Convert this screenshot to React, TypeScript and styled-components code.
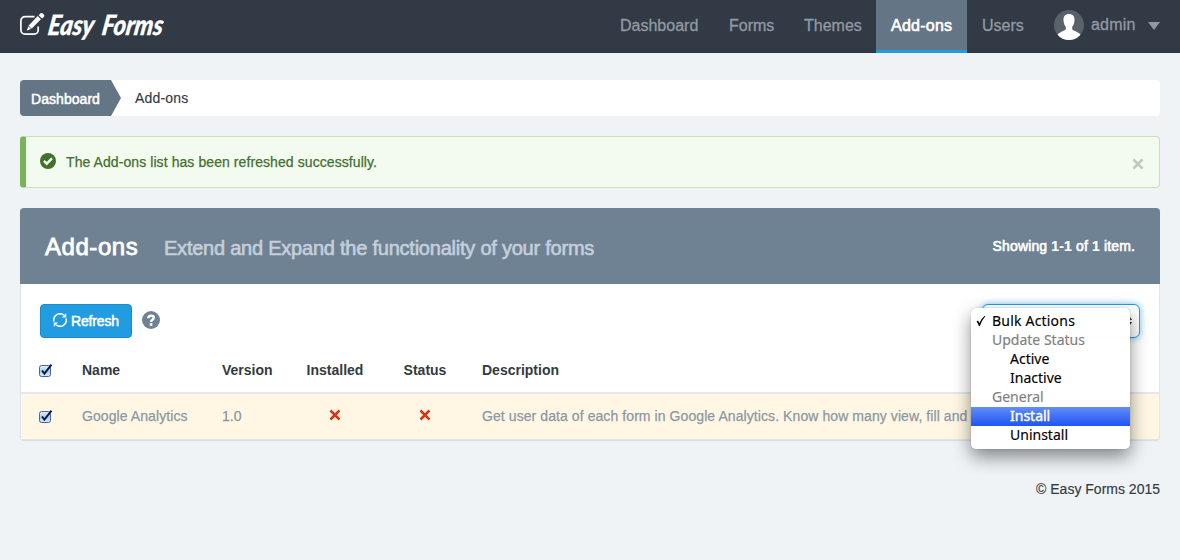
import React from 'react';
import styled, { createGlobalStyle } from 'styled-components';

const GlobalStyle = createGlobalStyle`
  * { box-sizing: border-box; }
  body {
    margin: 0;
    background: #eff3f6;
    color: #333a42;
    font: 14px/20px "Liberation Sans", Arial, sans-serif;
    overflow: hidden;
  }
`;

const Header = styled.header`
  display: flex;
  justify-content: space-between;
  height: 53px;
  padding: 0 20px;
  background: #323a45;
  border-bottom: 1px solid #2f3540;
`;

const Brand = styled.div`
  display: flex;
  align-items: flex-start;
  padding-top: 12px;
`;

const BrandName = styled.svg`
  margin-top: -6px;
  overflow: visible;
`;

const Nav = styled.nav`
  display: flex;
  height: 53px;
  font-size: 16px;
`;

const NavItem = styled.a<{ $active?: boolean; $width: number }>`
  width: ${(p) => p.$width}px;
  padding: 16px 0 0 15px;
  white-space: nowrap;
  color: ${(p) => (p.$active ? '#fff' : '#9299a3')};
  background: ${(p) => (p.$active ? '#647585' : 'transparent')};
  border-bottom: 3px solid ${(p) => (p.$active ? '#229ce1' : 'transparent')};
  letter-spacing: ${(p) => (p.$active ? '0.25px' : '0')};
  -webkit-text-stroke: ${(p) => (p.$active ? '0.6px #fff' : '0.3px #9299a3')};
`;

const UserMenu = styled.div`
  display: flex;
  padding: 10px 0 0 15px;
  color: #9299a3;
`;

const UserName = styled.span`
  flex: none;
  width: 64px;
  padding: 5px 0 0 7px;
  letter-spacing: 0.2px;
  -webkit-text-stroke: 0.3px #9299a3;
`;

const Caret = styled.span`
  align-self: flex-start;
  margin-top: 12px;
  border: 6px solid transparent;
  border-top: 8px solid #9299a3;
  border-bottom: 0;
`;

const Main = styled.main`
  padding: 27px 20px 0;
`;

const Breadcrumb = styled.div`
  display: flex;
  height: 36px;
  background: #fff;
  border-radius: 4px;
  overflow: hidden;
`;

const CrumbLink = styled.a`
  width: 101px;
  padding: 9px 0 0 11px;
  color: #fff;
  background: #647585;
  clip-path: polygon(0 0, 91px 0, 100% 50%, 91px 100%, 0 100%);
  letter-spacing: 0.05px;
  -webkit-text-stroke: 0.5px #fff;
`;

const CrumbCurrent = styled.span`
  padding: 8px 0 0 14px;
  letter-spacing: 0.2px;
  -webkit-text-stroke: 0.15px #333a42;
`;

const Alert = styled.div`
  display: flex;
  align-items: center;
  height: 52px;
  margin-top: 20px;
  padding: 0 15px 0 14px;
  color: #43702f;
  background: #f3faef;
  border: 1px solid #c8e2b7;
  border-left: 6px solid #78b459;
  border-radius: 4px;
  > svg { margin-top: -2px; }
`;

const AlertText = styled.span`
  flex: 1;
  margin-left: 10px;
  letter-spacing: 0.08px;
  -webkit-text-stroke: 0.25px #43702f;
`;

const CloseButton = styled.span`
  display: flex;
  padding-top: 6px;
`;

const Panel = styled.section`
  position: relative;
  margin-top: 20px;
  height: 232px;
  border: 1px solid #dfe6eb;
  border-top: 0;
  border-radius: 4px;
  background: #fff;
  box-shadow: 0 1px 1px #d5dde4;
`;

const PanelHeader = styled.div`
  display: flex;
  align-items: center;
  height: 76px;
  margin: 0 -1px;
  padding: 0 25px;
  background: #6f8293;
  border-radius: 4px 4px 0 0;
  color: #fff;
`;

const Title = styled.h1`
  width: 119px;
  margin: 0;
  padding-top: 2px;
  font-size: 24px;
  font-weight: 400;
  letter-spacing: 0.55px;
  -webkit-text-stroke: 0.8px #fff;
`;

const Subtitle = styled.span`
  flex: 1;
  padding-top: 4px;
  font-size: 20px;
  letter-spacing: -0.23px;
  color: #c5cfda;
  -webkit-text-stroke: 0.6px #c5cfda;
`;

const Summary = styled.span`
  letter-spacing: 0.14px;
  -webkit-text-stroke: 0.6px #fff;
  b { -webkit-text-stroke: 0.2px #fff; }
`;

const Toolbar = styled.div`
  display: flex;
  align-items: flex-start;
  height: 66px;
  padding: 20px 19px 0;
`;

const RefreshButton = styled.button`
  display: flex;
  align-items: center;
  gap: 4px;
  width: 92px;
  height: 34px;
  padding: 0 0 0 12px;
  border: 1px solid #1b8bcc;
  border-radius: 4px;
  background: #229ce1;
  color: #fff;
  font: 14px "Liberation Sans", Arial, sans-serif;
  letter-spacing: -0.15px;
  -webkit-text-stroke: 0.5px #fff;
  svg { flex: none; margin-top: -2px; }
`;

const HelpIcon = styled.svg`
  margin: 7px 0 0 10px;
`;

const Select = styled.div`
  display: flex;
  justify-content: flex-end;
  align-items: center;
  width: 158px;
  height: 34px;
  margin-left: auto;
  padding-right: 6px;
  background: #fff;
  border: 1px solid #229ce1;
  border-radius: 6px;
  box-shadow: 0 0 7px rgba(34, 156, 225, 0.6);
`;

const Row = styled.div<{ $head?: boolean }>`
  display: grid;
  grid-template-columns: 42px 140px 75px 76px 104px 1fr;
  align-items: center;
  height: ${(p) => (p.$head ? 44 : 45)}px;
  padding: 0 0 ${(p) => (p.$head ? 2 : 1)}px 19px;
  font-weight: ${(p) => (p.$head ? 700 : 400)};
  letter-spacing: ${(p) => (p.$head ? 0 : 0.08)}px;
  color: ${(p) => (p.$head ? '#323a43' : '#8d98a3')};
  background: ${(p) => (p.$head ? '#fff' : '#fff7e4')};
  border-bottom: ${(p) => (p.$head ? '2px solid #e3e8ee' : '0')};
  -webkit-text-stroke: ${(p) => (p.$head ? '0' : '0.25px #8d98a3')};
  white-space: nowrap;
`;

const IconCell = styled.span`
  display: flex;
  margin-left: -1px;
`;

const CenterCell = styled.span`
  display: flex;
  justify-content: center;
`;

const DescriptionCell = styled.span`
  padding-left: 5px;
`;

const CrossIcon = styled.svg`
  margin-top: -2px;
`;

const Menu = styled.div`
  position: absolute;
  z-index: 2;
  left: 950px;
  top: 100px;
  width: 159px;
  height: 141px;
  padding-top: 4px;
  border-radius: 5px;
  background: rgba(255, 255, 255, 0.985);
  box-shadow: 0 0 1px rgba(0, 0, 0, 0.5), 0 8px 18px rgba(0, 0, 0, 0.45);
  font: 14px/17px "Noto Sans", sans-serif;
  color: #000;
`;

const Option = styled.div<{ $kind?: 'group' | 'child' | 'active' }>`
  position: relative;
  height: 19px;
  padding-left: ${(p) => (p.$kind === 'child' || p.$kind === 'active' ? 39 : 21)}px;
  letter-spacing: ${(p) => (p.$kind ? 0 : 0.2)}px;
  color: ${(p) => (p.$kind === 'group' ? '#808080' : p.$kind === 'active' ? '#fff' : '#000')};
  background: ${(p) => (p.$kind === 'active' ? 'linear-gradient(#648df8, #1d55f5)' : 'none')};
  -webkit-text-stroke: ${(p) => (p.$kind === 'active' ? '0.4px #fff' : '0.15px currentColor')};
`;

const OptionCheck = styled.svg`
  position: absolute;
  left: 5px;
  top: 3px;
`;

const Footer = styled.footer`
  margin-top: 39px;
  text-align: right;
  -webkit-text-stroke: 0.15px #333a42;
`;

function Checkbox() {
  return (
    <svg width="14" height="15" viewBox="0 0 14 15">
      <defs>
        <linearGradient id="boxFill" x1="0" y1="0" x2="0" y2="1">
          <stop offset="0" stopColor="#e3effb" />
          <stop offset=".5" stopColor="#a9d0f5" />
          <stop offset="1" stopColor="#c9edff" />
        </linearGradient>
      </defs>
      <rect x=".5" y="2.5" width="11" height="11" rx="2" fill="url(#boxFill)" stroke="#5660a0" />
      <path d="M3 7.5 5.4 10.7 12.500 1.600" fill="none" stroke="#0c1c38" strokeWidth="2" />
    </svg>
  );
}

function Cross({ color }: { color: string }) {
  return (
    <CrossIcon width="12" height="12" viewBox="0 0 12 12">
      <path d="m2.4 2.4 7.2 7.2m0-7.2-7.2 7.2" stroke={color} strokeWidth="2.6" strokeLinecap="square" />
    </CrossIcon>
  );
}

function EditIcon() {
  return (
    <svg width="26" height="24" viewBox="0 0 26 24">
      <path d="M14.5 4.7H5A4.1 4.1 0 0 0 .9 8.8v9.3A4.1 4.1 0 0 0 5 22.2h9.1a4.1 4.1 0 0 0 4.1-4.1v-3.6" fill="none" stroke="#fff" strokeWidth="1.7" />
      <path d="m6.7 18.8 2-5.4 9-9.3 3.2 3.2-9.1 9.2Zm12-15.6 1.9-2q.9-.8 1.9.1l1.5 1.5q.8 1 0 1.9l-2 1.9Z" fill="#fff" />
      <path d="m8.5 14 2.9 2.9" stroke="#323a45" strokeWidth=".9" />
    </svg>
  );
}

export default function App() {
  return (
    <>
      <GlobalStyle />
      <Header>
        <Brand>
          <EditIcon />
          <BrandName width="118" height="38" viewBox="0 0 118 38">
            <g
              fill="#fff"
              stroke="#fff"
              strokeWidth=".3"
              fontFamily="Lato, sans-serif"
              fontSize="28"
              fontWeight="900"
              fontStyle="italic"
              transform="translate(4.5 0) skewX(-9)"
            >
              <text x="1" y="29" textLength="46" lengthAdjust="spacingAndGlyphs">Easy</text>
              <text x="55" y="29" textLength="61" lengthAdjust="spacingAndGlyphs">Forms</text>
            </g>
          </BrandName>
        </Brand>
        <Nav>
          <NavItem $width={109}>Dashboard</NavItem>
          <NavItem $width={75}>Forms</NavItem>
          <NavItem $width={87}>Themes</NavItem>
          <NavItem $width={91} $active>Add-ons</NavItem>
          <NavItem $width={72}>Users</NavItem>
          <UserMenu>
            <svg width="30" height="30" viewBox="0 0 30 30">
              <circle cx="15" cy="15" r="15" fill="#59616b" />
              <path d="M15 4c-4 0-5.7 2.7-5.5 6.1.1 3 .9 5.1 2.3 6.7v2.2c-.4 2-5.8 2.3-8.3 5.7A15 15 0 0 0 15 30a15 15 0 0 0 11.5-5.3c-2.5-3.4-7.900-3.7-8.3-5.7v-2.2c1.4-1.6 2.2-3.7 2.3-6.7C20.7 6.7 19 4 15 4Z" fill="#fff" />
            </svg>
            <UserName>admin</UserName>
            <Caret />
          </UserMenu>
        </Nav>
      </Header>
      <Main>
        <Breadcrumb>
          <CrumbLink>Dashboard</CrumbLink>
          <CrumbCurrent>Add-ons</CrumbCurrent>
        </Breadcrumb>
        <Alert>
          <svg width="16" height="16" viewBox="0 0 16 16">
            <circle cx="8" cy="8" r="8" fill="#43702f" />
            <path d="m3.9 7.9 2.8 2.8 5.3-5.3" fill="none" stroke="#f3faef" strokeWidth="2.4" />
          </svg>
          <AlertText>The Add-ons list has been refreshed successfully.</AlertText>
          <CloseButton><Cross color="#c0c9bd" /></CloseButton>
        </Alert>
        <Panel>
          <PanelHeader>
            <Title>Add-ons</Title>
            <Subtitle>Extend and Expand the functionality of your forms</Subtitle>
            <Summary>Showing <b>1-1</b> of <b>1</b> item.</Summary>
          </PanelHeader>
          <Toolbar>
            <RefreshButton>
              <svg width="14" height="14" viewBox="0 0 14 14">
                <path d="M.9 8.5A6.2 6.2 0 0 1 11 2.3M13.1 5.5A6.2 6.2 0 0 1 3 11.7" fill="none" stroke="#fff" strokeWidth="1.5" />
                <path d="M13.2.3v4.3H8.9ZM.8 13.7V9.4h4.3Z" fill="#fff" />
              </svg>
              Refresh
            </RefreshButton>
            <HelpIcon width="18" height="18" viewBox="0 0 18 18">
              <circle cx="9" cy="9" r="9" fill="#6f8293" />
              <path d="M6.3 7.3C6.3 5.3 7.4 4.7 9 4.7s2.8.7 2.8 2.1c0 2-2.8 1.9-2.8 4.1" fill="none" stroke="#fff" strokeWidth="2.4" />
              <path d="M7.7 12.2h2.7v2.6H7.7Z" fill="#fff" />
            </HelpIcon>
            <Select>
              <svg width="8" height="12" viewBox="0 0 8 12">
                <path d="m4 .8 3.2 4.200H.8ZM4 11.200 7.200 7H.8Z" fill="#323a43" />
              </svg>
            </Select>
          </Toolbar>
          <Row $head>
            <IconCell><Checkbox /></IconCell>
            <span>Name</span>
            <span>Version</span>
            <CenterCell>Installed</CenterCell>
            <CenterCell>Status</CenterCell>
            <DescriptionCell>Description</DescriptionCell>
          </Row>
          <Row>
            <IconCell><Checkbox /></IconCell>
            <span>Google Analytics</span>
            <span>1.0</span>
            <CenterCell><Cross color="#d9331a" /></CenterCell>
            <CenterCell><Cross color="#d9331a" /></CenterCell>
            <DescriptionCell>
              Get user data of each form in Google Analytics. Know how many view, fill and
            </DescriptionCell>
          </Row>
          <Menu>
            <Option>
              <OptionCheck width="10" height="12" viewBox="0 0 10 12">
                <path d="M.6 6.5 2 5.6l1.4 2.5Q5.5 3.3 8.7.7l.6.5Q5.9 5 3.9 11H2.8Q2 8.5.6 6.5Z" fill="#000" />
              </OptionCheck>
              Bulk Actions
            </Option>
            <Option $kind="group">Update Status</Option>
            <Option $kind="child">Active</Option>
            <Option $kind="child">Inactive</Option>
            <Option $kind="group">General</Option>
            <Option $kind="active">Install</Option>
            <Option $kind="child">Uninstall</Option>
          </Menu>
        </Panel>
        <Footer>© Easy Forms 2015</Footer>
      </Main>
    </>
  );
}
